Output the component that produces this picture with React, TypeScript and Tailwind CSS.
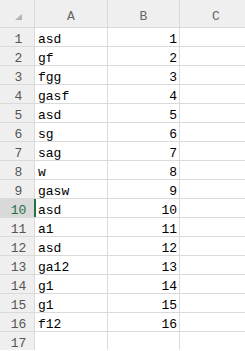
const rows: [string, number][] = [
  ['asd', 1],
  ['gf', 2],
  ['fgg', 3],
  ['gasf', 4],
  ['asd', 5],
  ['sg', 6],
  ['sag', 7],
  ['w', 8],
  ['gasw', 9],
  ['asd', 10],
  ['a1', 11],
  ['asd', 12],
  ['ga12', 13],
  ['g1', 14],
  ['g1', 15],
  ['f12', 16],
]

const font = { fontFamily: '"Liberation Mono", "DejaVu Sans Mono", monospace' }

export default function App() {
  const selected = 10

  return (
    <div className="w-[245px] h-[351px] overflow-hidden bg-white" style={font}>
      <div className="grid grid-cols-[34px_72px_71px_72px] grid-rows-[27px] auto-rows-[18px] gap-px bg-[#dadada] w-[252px] text-[13px] leading-none">
        {/* header row */}
        <div className="bg-[#efefef] relative">
          <div className="absolute left-[15px] top-[14px] w-0 h-0 border-l-[7px] border-l-transparent border-b-[6px] border-b-[#b4b4b4]" />
        </div>
        {['A', 'B', 'C'].map((c) => (
          <div key={c} className="bg-[#efefef] flex items-center justify-center text-[#666] pt-[6px]">
            {c}
          </div>
        ))}

        {rows.map(([txt, n], i) => {
          const r = i + 1
          const isSel = r === selected
          return [
            <div
              key={`h${r}`}
              className={
                isSel
                  ? 'bg-[#d9d9d9] text-[#1e7145] flex items-center justify-center pl-[3px] pt-[4px]'
                  : 'bg-[#efefef] text-[#555] flex items-center justify-center pl-[3px] pt-[4px]'
              }
            >
              {r}
            </div>,
            <div
              key={`a${r}`}
              className={
                isSel
                  ? 'bg-white text-black flex items-center pl-[2px] pt-[4px] border-l-2 border-[#217346] -ml-px'
                  : 'bg-white text-black flex items-center pl-[3px] pt-[4px]'
              }
            >
              {txt}
            </div>,
            <div key={`b${r}`} className="bg-white text-black flex items-center justify-end pr-[2px] pt-[4px]">
              {n}
            </div>,
            <div key={`c${r}`} className="bg-white" />,
          ]
        })}

        <div className="bg-[#efefef] text-[#555] flex items-center justify-center pl-[3px] pt-[4px]">17</div>
        <div className="bg-white" />
        <div className="bg-white" />
        <div className="bg-white" />
      </div>
    </div>
  )
}
